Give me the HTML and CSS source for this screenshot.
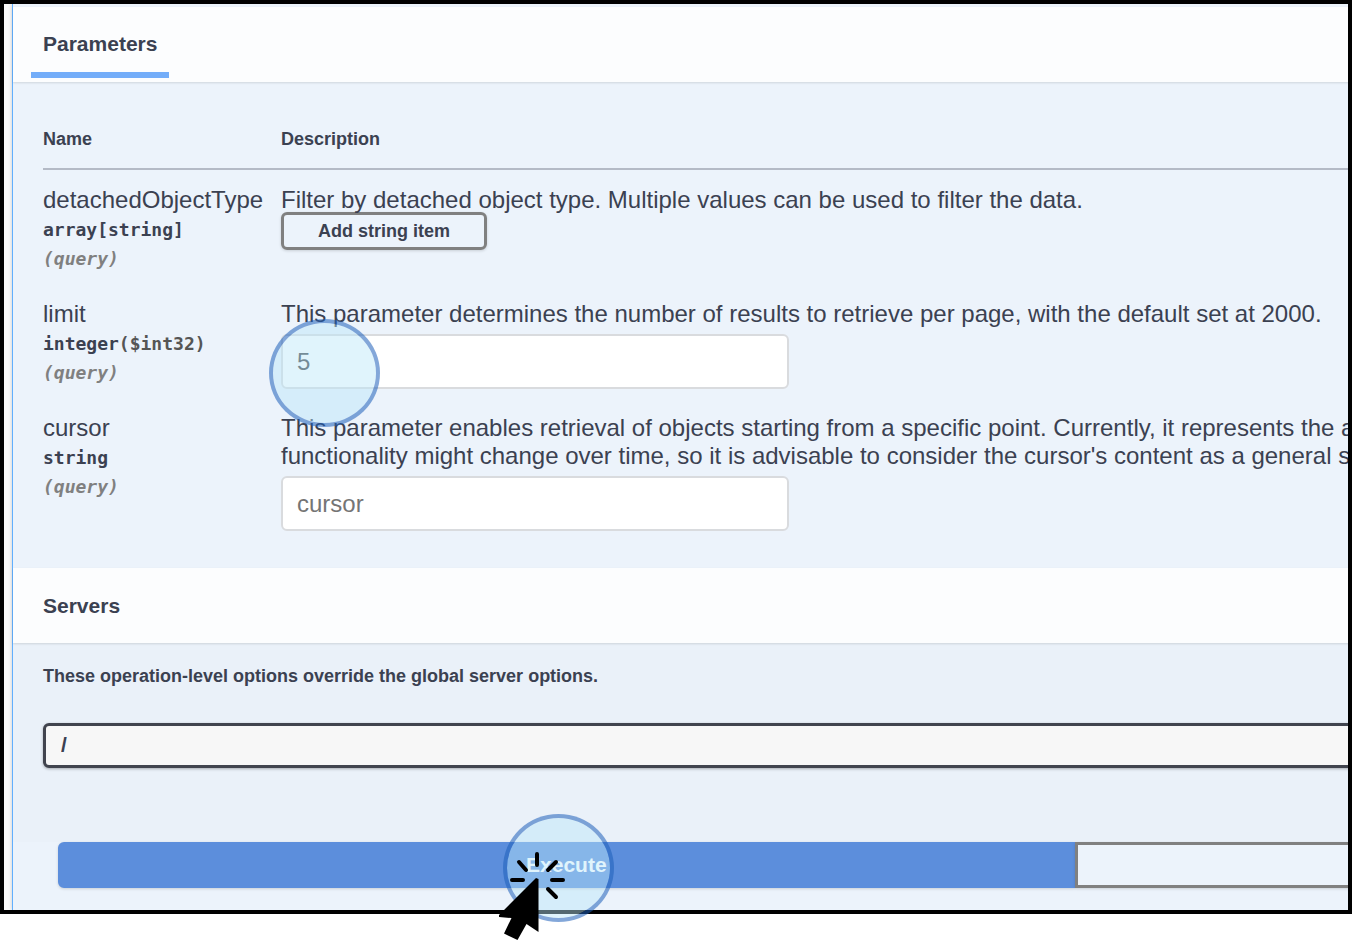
FILE: index.html
```html
<!DOCTYPE html>
<html lang="en">
<head>
<meta charset="utf-8">
<title>Parameters</title>
<link rel="stylesheet" href="styles.css">
</head>
<body>
<main class="frame">
  <div class="operation">
    <header class="section-header section-header-tabs">
      <h2 class="tab">Parameters</h2>
    </header>
    <section class="parameters">
      <table class="params">
        <thead>
          <tr><th class="col-name" scope="col">Name</th><th scope="col">Description</th></tr>
        </thead>
        <tbody>
          <tr>
            <td>
              <div class="param-name">detachedObjectType</div>
              <div class="param-type">array[string]</div>
              <div class="param-in">(query)</div>
            </td>
            <td>
              <p class="param-text">Filter by detached object type. Multiple values can be used to filter the data.</p>
              <button class="btn btn-add" type="button">Add string item</button>
            </td>
          </tr>
          <tr>
            <td>
              <label class="param-name" for="limit">limit</label>
              <div class="param-type">integer<span class="param-format">($int32)</span></div>
              <div class="param-in">(query)</div>
            </td>
            <td>
              <p class="param-text">This parameter determines the number of results to retrieve per page, with the default set at 2000.</p>
              <div class="field">
                <input class="text-input" id="limit" type="text" value="5">
                <span class="highlight highlight-field"></span>
              </div>
            </td>
          </tr>
          <tr>
            <td>
              <label class="param-name" for="cursor">cursor</label>
              <div class="param-type">string</div>
              <div class="param-in">(query)</div>
            </td>
            <td>
              <p class="param-text">This parameter enables retrieval of objects starting from a specific point. Currently, it represents the a<br>functionality might change over time, so it is advisable to consider the cursor's content as a general st</p>
              <div class="field">
                <input class="text-input" id="cursor" type="text" placeholder="cursor">
              </div>
            </td>
          </tr>
        </tbody>
      </table>
    </section>
    <header class="section-header">
      <h2 class="section-title">Servers</h2>
    </header>
    <section class="servers">
      <label class="servers-label" for="server">These operation-level options override the global server options.</label>
      <select class="server-select" id="server"><option>/</option></select>
    </section>
    <div class="actions">
      <div class="action">
        <button class="btn btn-execute" type="button">Execute</button>
        <span class="highlight highlight-execute"></span>
        <svg class="pointer" viewBox="0 0 68 90" aria-hidden="true">
          <g stroke="#000" stroke-width="4" stroke-linecap="round">
            <path d="M38 3V14M20 11l7 8M57 11l-8 8M13 29h11M53 29h11M49 38l8 8"/>
          </g>
          <path d="M37 27L39.500 28V81L27.500 73L18.500 89L5 82.500L12.500 67L0 66V64Z"/>
        </svg>
      </div>
      <div class="action">
        <button class="btn btn-clear" type="button" aria-label="Clear"></button>
      </div>
    </div>
  </div>
</main>
</body>
</html>
```
FILE: styles.css
```css
* {
  box-sizing: border-box;
}

body {
  min-height: 100vh;
  margin: 0;
  padding-bottom: 26px;
  background: #fff;
  color: #3b4151;
  font-family: "Liberation Sans", Arial, sans-serif;
}

h2,
p {
  margin: 0;
}

.frame {
  border: 4px solid #000;
  padding-left: 8px;
  background: #fafafa;
  overflow-x: clip;
  overflow-y: visible;
}

/* The operation is wider than the frame, which crops its right side. */
.operation {
  width: 159%;
  padding-top: 3px;
  border-left: 1px solid #61affe;
  background: #ecf3fb;
  box-shadow: 0 0 4px rgba(0, 0, 0, 0.2);
  clip-path: inset(0 0 -32px -6px);
}

.section-header {
  position: relative;
  display: flex;
  height: 75px;
  padding: 0 30px;
  align-items: center;
  background: #fcfdfe;
  box-shadow: 0 1px 2px rgba(0, 0, 0, 0.12);
}

.section-header-tabs {
  padding: 0 18px;
  align-items: stretch;
}

.tab,
.section-title {
  font-size: 21px;
  line-height: 24px;
  font-weight: 700;
}

.tab {
  margin-bottom: 4px;
  padding: 25px 12px 0;
  border-bottom: 6px solid #73adf9;
}

.parameters {
  padding: 44px 30px 37px;
}

.params {
  width: 100%;
  border-collapse: separate;
  border-spacing: 0;
  table-layout: fixed;
}

.params th {
  padding: 0 0 16px;
  border-bottom: 2px solid #b4bac6;
  font-size: 18px;
  line-height: 25px;
  text-align: left;
}

.params thead th {
  height: 44px;
}

.col-name {
  width: 238px;
}

.params td {
  height: 114px;
  padding: 16px 0 0;
  vertical-align: top;
  white-space: nowrap;
}

.param-name,
.param-text {
  display: block;
  font-size: 24px;
  line-height: 28px;
}

.param-type,
.param-in {
  font-family: "DejaVu Sans Mono", monospace;
  font-size: 18px;
  line-height: 29px;
  font-weight: 700;
}

.param-type {
  margin-top: 1px;
}

.param-format {
  color: #555;
}

.param-in {
  color: #808080;
  font-style: italic;
}

.btn {
  display: block;
  border: 3px solid #808080;
  background: transparent;
  color: #3b4151;
  font-family: inherit;
  font-weight: 700;
  box-shadow: 0 1px 3px rgba(0, 0, 0, 0.15);
}

.btn-add {
  width: 206px;
  height: 38px;
  margin-top: -2px;
  padding: 0;
  border-radius: 6px;
  font-size: 18px;
}

.field {
  position: relative;
  width: 508px;
  margin-top: 6px;
}

.text-input {
  display: block;
  width: 100%;
  height: 55px;
  padding: 0 14px;
  border: 2px solid #d9dbde;
  border-radius: 6px;
  background: #fff;
  color: #3b4147;
  font-family: inherit;
  font-size: 24px;
}

.text-input::placeholder {
  color: #757575;
}

.highlight {
  position: absolute;
  width: 111px;
  height: 108px;
  border: 4px solid rgba(29, 95, 185, 0.55);
  border-radius: 50%;
  background: rgba(187, 230, 249, 0.45);
  background-clip: padding-box;
  pointer-events: none;
}

.highlight-field {
  top: -15px;
  left: -12px;
}

.servers {
  padding: 20px 30px 74px;
  background: #eaf1f9;
}

.servers-label {
  display: block;
  font-size: 18px;
  line-height: 26px;
  font-weight: 700;
}

.server-select {
  display: block;
  width: 100%;
  height: 45px;
  margin-top: 34px;
  padding: 0 15px 2px;
  border: 3px solid #41444e;
  border-radius: 6px;
  background: #f7f7f7;
  color: #3b4151;
  font-family: inherit;
  font-size: 21px;
  font-weight: 700;
  appearance: none;
  box-shadow: 0 1px 3px rgba(0, 0, 0, 0.3);
}

.actions {
  display: flex;
  padding: 0 45px 22px;
}

.action {
  position: relative;
  flex: 1;
}

.btn-execute,
.btn-clear {
  width: 100%;
  height: 46px;
  font-size: 21px;
}

.btn-execute {
  border-color: #5c8edc;
  border-radius: 6px 0 0 6px;
  background: #5c8edc;
  color: #fff;
}

.btn-clear {
  border-radius: 0 6px 6px 0;
}

.highlight-execute {
  top: -28px;
  left: calc(50% - 63px);
}

.pointer {
  position: absolute;
  top: 9px;
  left: calc(50% - 67px);
  width: 68px;
  height: 90px;
}
```
